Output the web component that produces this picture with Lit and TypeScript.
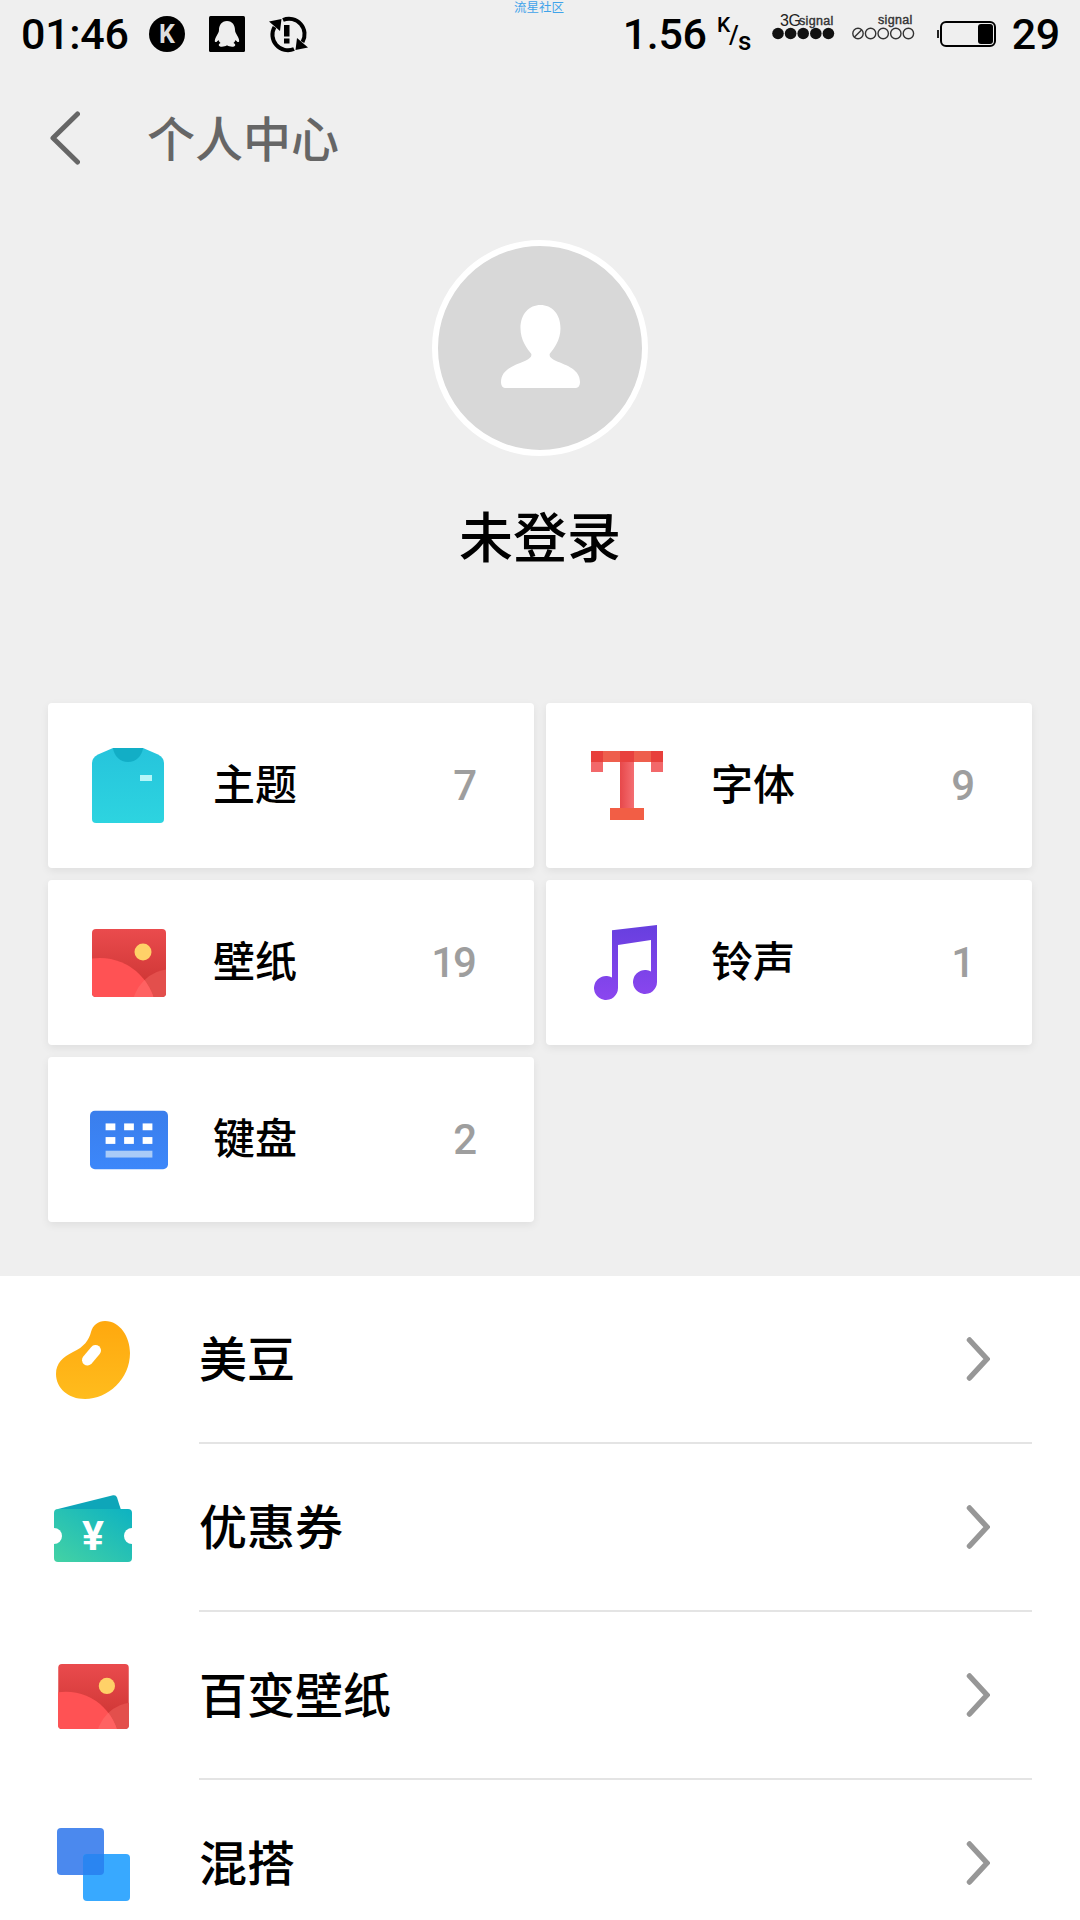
import { LitElement, html, css, svg } from 'lit';
import { customElement } from 'lit/decorators.js';

const wallpaperIcon = (w: number, h: number) => html`
  <svg width=${w} height=${h} viewBox="0 0 74 68">
    <defs>
      <linearGradient id="wpBg" x1="0" y1="0" x2="0" y2="1">
        <stop offset="0" stop-color="#ea4b4d" />
        <stop offset="1" stop-color="#c93230" />
      </linearGradient>
      <clipPath id="wpClip"><rect width="74" height="68" rx="4" /></clipPath>
      <clipPath id="wpHill"><circle cx="8" cy="85" r="56" /></clipPath>
    </defs>
    <g clip-path="url(#wpClip)">
      <rect width="74" height="68" fill="url(#wpBg)" />
      <circle cx="51" cy="23" r="8.5" fill="#ffd168" />
      <circle cx="80" cy="80" r="40" fill="#e34f4c" />
      <circle cx="8" cy="85" r="56" fill="#ff5254" />
      <circle cx="80" cy="80" r="40" fill="#ff6262" clip-path="url(#wpHill)" />
    </g>
  </svg>
`;

const shirtIcon = html`
  <svg width="72" height="75" viewBox="0 0 72 75">
    <defs>
      <linearGradient id="shirt" x1="0" y1="0" x2="0" y2="1">
        <stop offset="0" stop-color="#26c4dc" />
        <stop offset="1" stop-color="#2dd4e0" />
      </linearGradient>
    </defs>
    <path d="M21 0H51L66 6.500Q72 9.500 72 15V71Q72 75 68 75H4Q0 75 0 71V15Q0 9.500 6 6.500Z" fill="url(#shirt)" />
    <path d="M21 0H51C50 8 44 14 36 14S22 8 21 0Z" fill="#12aec6" />
    <rect x="48" y="27" width="12" height="6" fill="#b5f6f8" />
  </svg>
`;

const fontIcon = html`
  <svg width="72" height="69" viewBox="0 0 72 69">
    <defs>
      <linearGradient id="stem" x1="0" y1="0" x2="1" y2="0">
        <stop offset="0" stop-color="#e7484a" />
        <stop offset="1" stop-color="#f46e72" />
      </linearGradient>
    </defs>
    <rect x="29" y="11" width="14" height="46" fill="url(#stem)" />
    <rect width="72" height="11" fill="#ee5f4d" />
    <rect width="12" height="11" fill="#e8403c" />
    <rect x="60" width="12" height="11" fill="#e8403c" />
    <rect x="29" width="14" height="11" fill="#e8413e" />
    <rect y="11" width="12" height="10" fill="#f2686a" />
    <rect x="60" y="11" width="12" height="10" fill="#f2686a" />
    <rect x="19" y="57" width="34" height="12" fill="#f25e45" />
  </svg>
`;

const musicIcon = html`
  <svg width="63" height="75" viewBox="0 0 63 75">
    <defs>
      <linearGradient id="music" x1="0" y1="0" x2="0" y2="1">
        <stop offset="0" stop-color="#673fdf" />
        <stop offset="1" stop-color="#8b46ef" />
      </linearGradient>
    </defs>
    <path
      d="M18 5.300L63 0V57A12 12 0 1 1 57 46.600V15L24 20V63A12 12 0 1 1 18 52.600Z"
      fill="url(#music)"
    />
  </svg>
`;

const keyboardIcon = html`
  <svg width="80" height="60" viewBox="0 0 80 60">
    <defs>
      <linearGradient id="keys" x1="0" y1="0" x2="0" y2="1">
        <stop offset="0" stop-color="#3a7eec" />
        <stop offset="1" stop-color="#3c87fa" />
      </linearGradient>
    </defs>
    <rect width="80" height="60" rx="5" fill="url(#keys)" />
    <g fill="#fff">
      <rect x="16" y="13" width="10" height="7" />
      <rect x="35" y="13" width="10" height="7" />
      <rect x="54" y="13" width="10" height="7" />
      <rect x="16" y="27" width="10" height="7" />
      <rect x="35" y="27" width="10" height="7" />
      <rect x="54" y="27" width="10" height="7" />
    </g>
    <rect x="16" y="41" width="48" height="7" fill="#a9cbf8" />
  </svg>
`;

const beanIcon = html`
  <svg width="74" height="78" viewBox="0 0 74 78">
    <defs>
      <linearGradient id="bean" x1="0" y1="0" x2="0" y2="1">
        <stop offset="0" stop-color="#ffa80e" />
        <stop offset="1" stop-color="#ffbc1d" />
      </linearGradient>
    </defs>
    <path
      d="M49 0C64 0 74 16 74 32C74 58 52 78 29 78C12 78 0 67 0 53C0 42 7 36 17 31C28 26 33 19 35 11C37 4 42 0 49 0Z"
      fill="url(#bean)"
    />
    <path d="M31.500 39L39.500 29.500" stroke="#fff" stroke-width="11" stroke-linecap="round" />
  </svg>
`;

const couponIcon = html`
  <svg width="78" height="67" viewBox="0 0 78 67">
    <defs>
      <linearGradient id="coupon" x1="0" y1="1" x2="1" y2="0">
        <stop offset="0" stop-color="#44d2a4" />
        <stop offset="1" stop-color="#0db2c2" />
      </linearGradient>
      <mask id="notch">
        <rect width="78" height="67" fill="#fff" />
        <circle cx="0" cy="41" r="8" fill="#000" />
        <circle cx="78" cy="41" r="8" fill="#000" />
      </mask>
    </defs>
    <path d="M4 14L59 0.300Q62 -0.300 63 2.500L67 15Z" fill="#0ea6b9" />
    <rect y="14" width="78" height="53" rx="4" fill="url(#coupon)" mask="url(#notch)" />
    <text x="39" y="54.500" text-anchor="middle" class="yen">¥</text>
  </svg>
`;

const mixIcon = html`
  <svg width="73" height="73" viewBox="0 0 73 73">
    <rect width="47" height="47" rx="4" fill="#4b89ee" />
    <rect x="26" y="26" width="47" height="47" rx="4" fill="#38a9ff" />
    <path d="M26 30Q26 26 30 26H47V43Q47 47 43 47H26Z" fill="#2a85f1" />
  </svg>
`;

const personIcon = html`
  <svg width="79" height="85" viewBox="0 0 81 85">
    <path
      d="M40.500 0C52 0 61 9 61 24C61 36 54 45 50 50C49 53 52 55 56 57C68 62 81 66 81 79C81 83 79 85 77 85H4C2 85 0 83 0 79C0 66 13 62 25 57C29 55 32 53 31 50C27 45 20 36 20 24C20 9 29 0 40.500 0Z"
      fill="#fff"
    />
  </svg>
`;

const signalDots = (filled: boolean) =>
  [0, 1, 2, 3, 4].map((i) => {
    const cx = 6 + i * 12.6;
    if (filled) return svg`<circle cx=${cx} cy="21.500" r="5.800" fill="#111" />`;
    return svg`
      <circle cx=${cx} cy="21.500" r="5.200" fill="none" stroke="#333" stroke-width="1.400" />
      ${i === 0 ? svg`<path d="M2.500 25L9.500 18" stroke="#333" stroke-width="1.400" />` : ''}
    `;
  });

@customElement('app-root')
export class AppRoot extends LitElement {
  static styles = css`
    :host {
      display: block;
      width: 1080px;
      height: 1920px;
      overflow: hidden;
      position: relative;
      background: #efefef;
      color: #000;
      font-family: 'Noto Sans CJK SC', Roboto, sans-serif;
    }
    .watermark {
      position: absolute;
      top: 0;
      left: 514px;
      font-size: 12.500px;
      line-height: 14px;
      color: #3fa3ea;
    }
    .status {
      height: 70px;
      display: flex;
      align-items: center;
      padding: 0 20px 2px 21px;
      font-family: Roboto, sans-serif;
      font-weight: 500;
      box-sizing: border-box;
    }
    .status svg {
      display: block;
      flex: none;
    }
    .status .time,
    .status .speed,
    .status .level {
      font-size: 43px;
      line-height: 68px;
      letter-spacing: -0.3px;
    }
    .status .time {
      width: 128px;
    }
    .status .qq {
      margin-left: 24px;
    }
    .status .sync {
      margin-left: 24px;
    }
    .status .speed {
      margin-left: auto;
    }
    .status .unit {
      margin: 0 19px 0 10px;
    }
    .status .sig2 {
      margin-left: 16px;
    }
    .status .battery {
      margin-left: 21px;
    }
    .status .level {
      margin-left: 16px;
    }
    .status text {
      font-family: 'Liberation Sans', sans-serif;
      font-weight: 400;
    }
    .status text.k {
      font-family: Roboto, sans-serif;
      font-weight: 700;
    }
    .status text.unit-text {
      font-family: Roboto, sans-serif;
      font-weight: 500;
    }
    .status text.sig {
      letter-spacing: 0.3px;
      stroke: #333;
      stroke-width: 0.4px;
    }
    .header {
      height: 140px;
      display: flex;
      align-items: center;
      padding-left: 50px;
      box-sizing: border-box;
    }
    .header svg {
      margin-bottom: 4px;
    }
    .header h1 {
      margin: 0 0 8px 67px;
      font-size: 48px;
      font-weight: 500;
      color: #666;
      line-height: 60px;
    }
    .profile {
      display: flex;
      flex-direction: column;
      align-items: center;
      padding-top: 30px;
    }
    .avatar {
      width: 216px;
      height: 216px;
      box-sizing: border-box;
      border: 6px solid #fff;
      border-radius: 50%;
      background: #d8d8d8;
      display: flex;
      align-items: center;
      justify-content: center;
      padding-bottom: 4px;
    }
    .name {
      margin-top: 49px;
      margin-bottom: 2px;
      font-size: 54px;
      line-height: 60px;
      font-weight: 500;
    }
    .grid {
      margin-top: 136px;
      padding: 0 48px;
      display: grid;
      grid-template-columns: 486px 486px;
      grid-auto-rows: 165px;
      column-gap: 12px;
      row-gap: 12px;
    }
    .card {
      background: #fff;
      border-radius: 4px;
      box-shadow: 0 3px 8px rgba(0, 0, 0, 0.07);
      display: flex;
      align-items: center;
      padding: 0 59px 0 40px;
    }
    .card .slot {
      width: 80px;
      display: flex;
      justify-content: center;
      flex: none;
    }
    .card .slot.right {
      padding-left: 2px;
      width: 78px;
    }
    .card .slot.left {
      padding-right: 2px;
      width: 78px;
    }
    .card .label {
      margin-left: 45px;
      padding-bottom: 7px;
      font-size: 42px;
      line-height: 50px;
      font-weight: 500;
      flex: 1;
    }
    .card .count {
      font-family: Roboto, sans-serif;
      font-size: 42px;
      font-weight: 500;
      letter-spacing: -2px;
      color: #9e9e9e;
    }
    .list {
      margin-top: 54px;
      background: #fff;
    }
    .row {
      height: 168px;
      display: flex;
      padding: 0 48px;
    }
    .row .slot {
      width: 90px;
      display: flex;
      align-items: center;
      justify-content: center;
      flex: none;
    }
    .row .body {
      margin-left: 61px;
      flex: 1;
      display: flex;
      align-items: center;
      justify-content: space-between;
      padding-right: 42px;
      border-bottom: 2px solid #e4e4e4;
    }
    .row .title {
      font-size: 48px;
      line-height: 60px;
      font-weight: 500;
      padding-bottom: 7px;
    }
    .yen {
      font-family: Roboto, sans-serif;
      font-weight: 700;
      font-size: 41px;
      fill: #fff;
    }
  `;

  private cards = [
    { icon: shirtIcon, label: '主题', count: 7, nudge: '' },
    { icon: fontIcon, label: '字体', count: 9, nudge: 'right' },
    { icon: wallpaperIcon(74, 68), label: '壁纸', count: 19, nudge: 'right' },
    { icon: musicIcon, label: '铃声', count: 1, nudge: 'left' },
    { icon: keyboardIcon, label: '键盘', count: 2, nudge: 'right' },
  ];

  private rows = [
    { icon: beanIcon, title: '美豆' },
    { icon: couponIcon, title: '优惠券' },
    { icon: wallpaperIcon(71, 65), title: '百变壁纸' },
    { icon: mixIcon, title: '混搭' },
  ];

  private renderStatus() {
    return html`
      <div class="status">
        <span class="time">01:46</span>
        <svg width="36" height="36" viewBox="0 0 36 36">
          <circle cx="18" cy="18" r="18" fill="#000" />
          <text class="k" x="18" y="27" text-anchor="middle" font-size="25" fill="#ddd">K</text>
        </svg>
        <svg class="qq" width="36" height="36" viewBox="0 0 36 36">
          <rect width="36" height="36" rx="1.500" fill="#000" />
          <path
            d="M18 5C12.500 5 10 9.500 10 14C10 16.500 8.500 18 7 21C5.500 24 5.500 26 6.500 26C7.500 26.500 8.500 25 9.500 24C10 25.500 10.500 26 11.500 27C9.500 28 9 29.500 11 30.500C13 31 16.500 30.500 17.500 29.500H18.500C19.500 30.500 23 31 25 30.500C27 29.500 26.500 28 24.500 27C25.500 26 26 25.500 26.500 24C27.500 25 28.500 26.500 29.500 26C30.500 26 30.500 24 29 21C27.500 18 26 16.500 26 14C26 9.500 23.500 5 18 5Z"
            fill="#eee"
          />
        </svg>
        <svg class="sync" width="39" height="39" viewBox="0 0 39 39">
          <path d="M14 5A15.500 15.500 0 0 1 33.500 27" fill="none" stroke="#000" stroke-width="4" />
          <path d="M25 34A15.500 15.500 0 0 1 5.500 12" fill="none" stroke="#000" stroke-width="4" />
          <path d="M0 6.500L12.500 4L11 16Z" fill="#000" />
          <path d="M39 32.500L26.500 35L28 23Z" fill="#000" />
          <rect x="15" y="10" width="5.500" height="11.500" fill="#000" />
          <rect x="15" y="23.500" width="5.500" height="5" fill="#000" />
        </svg>
        <span class="speed">1.56</span>
        <svg class="unit" width="36" height="44" viewBox="0 0 36 44">
          <text class="unit-text" x="0" y="20" font-size="21" fill="#000">K</text>
          <text class="unit-text" x="12" y="32" font-size="25" fill="#000">/</text>
          <text class="unit-text" x="21" y="38" font-size="26" fill="#000">s</text>
        </svg>
        <svg width="64" height="44" viewBox="0 0 64 44">
          <text x="8" y="14" font-size="16" letter-spacing="-0.5" fill="#222">3G</text>
          <text class="sig" x="27" y="13" font-size="12.500" fill="#333">signal</text>
          ${signalDots(true)}
        </svg>
        <svg class="sig2" width="64" height="44" viewBox="0 0 64 44">
          <text class="sig" x="26" y="12" font-size="12.500" fill="#333">signal</text>
          ${signalDots(false)}
        </svg>
        <svg class="battery" width="59" height="26" viewBox="0 0 59 26">
          <rect x="0" y="9" width="2" height="8" fill="#222" />
          <rect x="4" y="1" width="54" height="24" rx="5" fill="none" stroke="#000" stroke-width="2" />
          <rect x="41" y="3" width="15" height="20" rx="3" fill="#000" />
        </svg>
        <span class="level">29</span>
      </div>
    `;
  }

  render() {
    return html`
      <div class="watermark">流星社区</div>
      ${this.renderStatus()}
      <div class="header">
        <svg width="30" height="54" viewBox="0 0 30 54">
          <path d="M27.500 3L3 27L27.500 51" fill="none" stroke="#666" stroke-width="5" stroke-linecap="round" stroke-linejoin="round" />
        </svg>
        <h1>个人中心</h1>
      </div>
      <div class="profile">
        <div class="avatar">${personIcon}</div>
        <div class="name">未登录</div>
      </div>
      <div class="grid">
        ${this.cards.map(
          (c) => html`
            <div class="card">
              <div class="slot ${c.nudge}">${c.icon}</div>
              <div class="label">${c.label}</div>
              <div class="count">${c.count}</div>
            </div>
          `
        )}
      </div>
      <div class="list">
        ${this.rows.map(
          (r) => html`
            <div class="row">
              <div class="slot">${r.icon}</div>
              <div class="body">
                <div class="title">${r.title}</div>
                <svg width="24" height="44" viewBox="0 0 24 44">
                  <path d="M3.500 3L21 22L3.500 41" fill="none" stroke="#979797" stroke-width="5.500" stroke-linecap="round" stroke-linejoin="miter" />
                </svg>
              </div>
            </div>
          `
        )}
      </div>
    `;
  }
}
